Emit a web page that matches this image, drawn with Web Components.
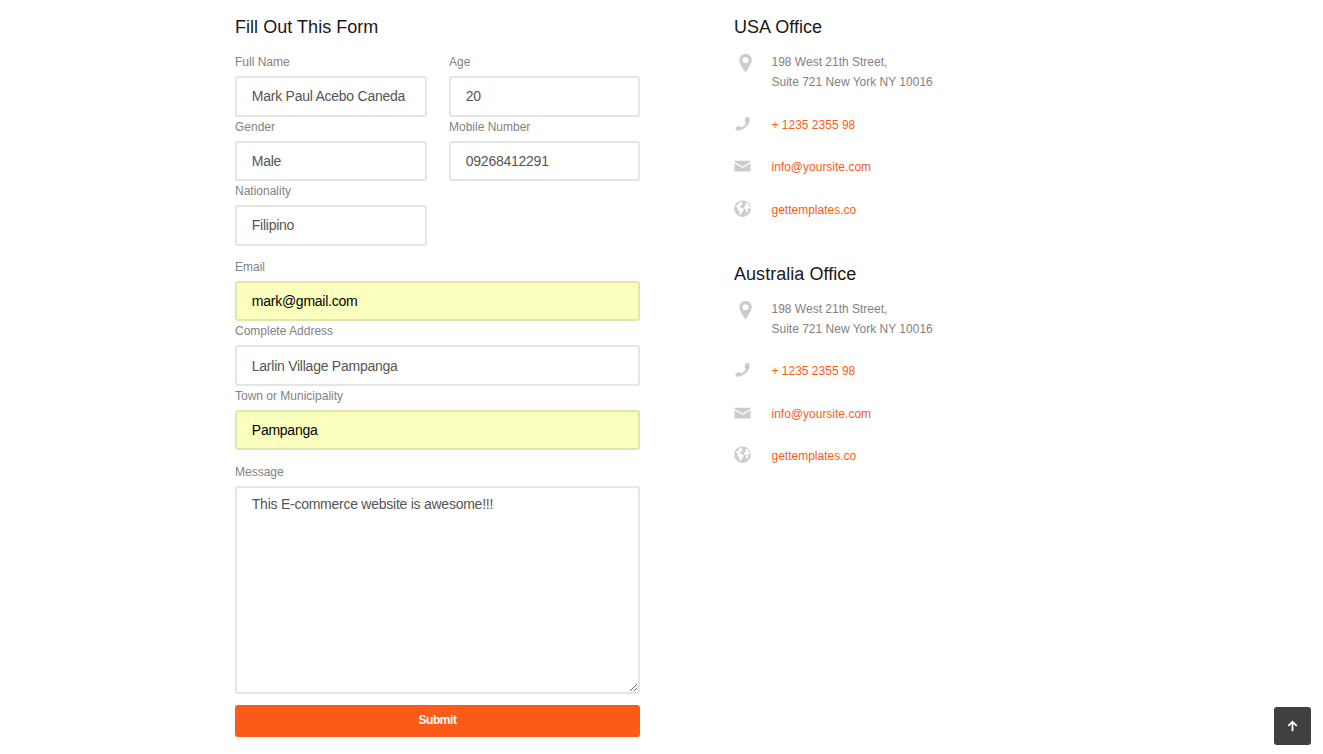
<!DOCTYPE html>
<html lang="en">
<head>
<meta charset="utf-8">
<title>Contact</title>
<style>
body { margin: 0; background: #fff; font-family: "Liberation Sans", Arial, sans-serif; font-size: 12px; line-height: 20px; color: #828282; overflow: hidden; }
</style>
</head>
<body>
<contact-page></contact-page>
<script>
const define = (name, html, setup) => customElements.define(name, class extends HTMLElement {
  constructor() {
    super();
    const root = this.attachShadow({ mode: 'open' });
    const t = document.createElement('template');
    t.innerHTML = html;
    root.append(t.content.cloneNode(true));
  }
  connectedCallback() { if (setup) setup(this, this.shadowRoot); }
});

define('section-title', `
<style>:host{display:block} h3{margin:0;font-size:18px;line-height:28px;font-weight:400;color:#181818;letter-spacing:.04px}</style>
<h3><slot></slot></h3>`);

define('form-field', `
<style>
:host{display:block;height:64.5px}
:host([multiline]){height:232px}
label{display:block;height:24px;line-height:20px}
input,textarea{display:block;box-sizing:border-box;width:100%;height:40.5px;margin:0;padding:0 14.8px;border:2px solid #e5e5e5;border-radius:3px;background:#fff;color:#555;font:14px/20px "Liberation Sans",Arial,sans-serif;letter-spacing:-.25px;outline:0}
textarea{height:208px;padding:6px 14.8px;resize:vertical}
:host([filled]) input{background:#faffbd;border-color:#e1e6aa;color:#000}
</style>
<label for="c"><slot></slot></label>`, (el, root) => {
  if (root.querySelector('#c')) return;
  const c = document.createElement(el.hasAttribute('multiline') ? 'textarea' : 'input');
  c.id = 'c';
  c.value = el.getAttribute('value');
  root.append(c);
});

define('submit-button', `
<style>:host{display:block} button{display:block;width:100%;height:32px;border:0;border-radius:3px;padding:0 0 2px;background:#fb5b16;color:#fff;font:bold 12px/20px "Liberation Sans",Arial,sans-serif;letter-spacing:-.45px}</style>
<button><slot></slot></button>`);

const icons = {
  pin: '<path d="M11.5 1.1C8 1.1 5.3 3.8 5.3 7.1c0 3.5 3.2 8.1 6.2 12.5 3-4.4 6.2-9 6.2-12.5 0-3.3-2.7-6-6.2-6zm0 3.2a3 3 0 1 1 0 6 3 3 0 0 1 0-6z"/>',
  phone: '<path d="M11.2 4.6c.1-1 1.1-1.6 2.3-1.5 1.4.1 2.2.9 2.2 2.3 0 2.5-1.3 5.2-3.7 7.4-2.3 2.2-5 3.8-7.8 3.9-1.4 0-2.5-.7-2.7-1.7-.2-1.1.5-1.9 1.7-2.3 1.2-.5 2.5-.7 3.2-.1.5.4.5 1 1 .9 1.3-.4 4-3 4.5-4.4.1-.6-.7-.7-.9-1.4-.2-.8.1-2.1.2-3.1z"/>',
  mail: '<path transform="translate(-.5)" d="M.9 4.8h16.2v1L9 10.5.9 5.8zM.9 7.2 9 11.9l8.1-4.7v8.4H.9z"/>',
  globe: '<path fill-rule="evenodd" d="M8.5 1.4a8.3 8.3 0 1 0 0 16.6 8.3 8.3 0 0 0 0-16.6zM2.3 6.5 5 5.2 4.4 3.8l2.5-1.1 1.6.7-.8 1.3 1.2.5-1.8 1.5-1.5.2.1 1.5 2.2.3 2 1.8-.8 2.1-1.5 1.2-.8 2-1.1-.4-.6-3-1.5-1.5.2-2.1-1.6-.7zM11 4l2.2.1 1.8 2.1.7 2.3-.6 1.2-1.3-.5-.4 1.4.8 1-1.2 2-.9-.4-.2-2.6-1.7-1.2.2-2.1 1.8-1-.7-.7z"/>'
};

define('contact-row', `
<style>
:host{display:flex;align-items:flex-start;margin-bottom:22.5px}
svg{flex:none;width:20px;height:20px;margin:1px 17.5px 0 0;fill:#ccc}
:host([link]) svg{margin:-1px 17.5px 0 0}
.t{flex:1;min-width:0}
:host([link]) .t{color:#fb5b16}
</style>
<svg viewBox="0 0 20 20"></svg><div class="t"><slot></slot></div>`, (el, root) => {
  root.querySelector('svg').innerHTML = icons[el.getAttribute('icon')];
});

define('office-card', `
<style>:host{display:block} .rows{padding-top:11px}</style>
<section-title><slot name="title"></slot></section-title>
<div class="rows">
<contact-row icon="pin">198 West 21th Street,<br>Suite 721 New York NY 10016</contact-row>
<contact-row icon="phone" link>+ 1235 2355 98</contact-row>
<contact-row icon="mail" link>info@yoursite.com</contact-row>
<contact-row icon="globe" link>gettemplates.co</contact-row>
</div>`);

define('to-top', `
<style>
:host{position:fixed;right:12px;bottom:9px;width:37px;height:38px}
button{display:flex;width:100%;height:100%;align-items:center;justify-content:center;padding:0;border:0;border-radius:3px;background:#404040}
svg{width:11px;height:12px;fill:none;stroke:#fff;stroke-width:1.8}
</style>
<button aria-label="Back to top"><svg viewBox="0 0 11 12"><path d="M5.5 11.2V1.5M1.3 5.9 5.5 1.7l4.2 4.2"/></svg></button>`);

define('contact-page', `
<style>
:host{display:block;height:754px}
main{display:grid;grid-template-columns:405px 405px;column-gap:94px;padding:13px 0 0 235px}
.pairs{display:grid;grid-template-columns:192px 191px;column-gap:22px;padding-top:11px}
.full{padding-top:11.3px}
.msg{padding-top:11.7px}
.send{padding-top:11px}
.second{margin-top:40.1px}
</style>
<main>
<form>
<section-title>Fill Out This Form</section-title>
<div class="pairs">
<form-field value="Mark Paul Acebo Caneda">Full Name</form-field>
<form-field value="20">Age</form-field>
<form-field value="Male">Gender</form-field>
<form-field value="09268412291">Mobile Number</form-field>
<form-field value="Filipino">Nationality</form-field>
</div>
<div class="full">
<form-field filled value="mark@gmail.com">Email</form-field>
<form-field value="Larlin Village Pampanga">Complete Address</form-field>
<form-field filled value="Pampanga">Town or Municipality</form-field>
</div>
<div class="msg"><form-field multiline value="This E-commerce website is awesome!!!">Message</form-field></div>
<div class="send"><submit-button>Submit</submit-button></div>
</form>
<aside>
<office-card><span slot="title">USA Office</span></office-card>
<office-card class="second"><span slot="title">Australia Office</span></office-card>
</aside>
</main>
<to-top></to-top>`);
</script>
</body>
</html>
